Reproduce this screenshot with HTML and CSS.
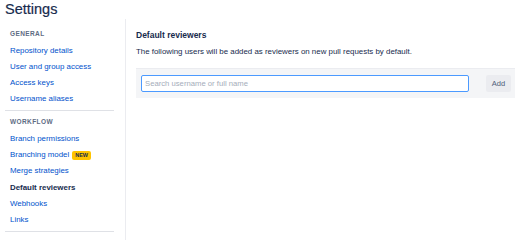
FILE: index.html
```html
<!DOCTYPE html>
<html lang="en">
<head>
    <meta charset="UTF-8">
    <title>Settings</title>
    <link rel="stylesheet" href="styles.css">
</head>
<body>
    <h1 class="page-title">Settings</h1>
    <div class="layout">
        <aside class="sidebar">
            <div class="nav-group first">
                <div class="nav-heading">General</div>
                <a class="nav-link" href="#">Repository details</a>
                <a class="nav-link" href="#">User and group access</a>
                <a class="nav-link" href="#">Access keys</a>
                <a class="nav-link" href="#">Username aliases</a>
            </div>
            <div class="nav-group">
                <div class="nav-heading">Workflow</div>
                <a class="nav-link" href="#">Branch permissions</a>
                <a class="nav-link" href="#">Branching model <span class="badge">NEW</span></a>
                <a class="nav-link" href="#">Merge strategies</a>
                <a class="nav-link active" href="#">Default reviewers</a>
                <a class="nav-link" href="#">Webhooks</a>
                <a class="nav-link" href="#">Links</a>
            </div>
        </aside>

        <main class="content">
            <h2>Default reviewers</h2>
            <p class="description">The following users will be added as reviewers on new pull requests by default.</p>
            <div class="reviewer-form">
                <input class="search" type="text" placeholder="Search username or full name">
                <button class="add-btn">Add</button>
            </div>
        </main>
    </div>
</body>
</html>
```

FILE: styles.css
```css
body {
    margin: 0;
    font-family: "Liberation Sans", Arial, sans-serif;
    color: #172b4d;
    background-color: #fff;
    overflow: hidden;
}

.page-title {
    margin: 0 0 0 5px;
    font-size: 14.5px;
    line-height: 19px;
    font-weight: normal;
    color: #172b4d;
    -webkit-text-stroke: 0.2px #172b4d;
}

.layout {
    display: flex;
    height: 221px;
}

.sidebar {
    width: 126px;
    box-sizing: border-box;
    padding: 0 11px 0 5px;
    border-right: 1px solid #ebecf0;
}

.nav-group {
    display: flex;
    flex-direction: column;
    padding: 6px 0 2.5px;
    border-bottom: 1px solid #dfe1e6;
}

.nav-group.first {
    padding-top: 10px;
}

.nav-heading {
    font-size: 6.5px;
    line-height: 10px;
    font-weight: bold;
    letter-spacing: 0.4px;
    text-transform: uppercase;
    color: #5e6c84;
    margin: 0 0 3.5px 5px;
}

.nav-link {
    display: flex;
    align-items: center;
    padding-left: 5px;
    font-size: 7.9px;
    line-height: 16.3px;
    color: #0052cc;
    text-decoration: none;
}

.nav-link.active {
    color: #172b4d;
    font-weight: bold;
}

.badge {
    margin-left: 3px;
    padding: 0 3px;
    font-size: 5.5px;
    line-height: 9px;
    font-weight: bold;
    color: #172b4d;
    background-color: #ffc400;
    border-radius: 2px;
}

.content {
    flex: 1;
    padding: 0 5px 0 10px;
}

h2 {
    margin: 10px 0 0;
    font-size: 8.5px;
    line-height: 12px;
    font-weight: bold;
}

.description {
    margin: 6px 0 0;
    font-size: 7.9px;
    line-height: 10px;
}

.reviewer-form {
    display: flex;
    align-items: center;
    gap: 17px;
    margin-top: 11px;
    padding: 6px 4px 6px 5px;
    background-color: #f4f5f7;
    border-top: 1px solid #ebecf0;
}

.search {
    width: 328px;
    height: 17px;
    box-sizing: border-box;
    padding: 0 3px;
    font-family: inherit;
    font-size: 7.7px;
    color: #172b4d;
    background-color: #fff;
    border: 1.5px solid #4c9aff;
    border-radius: 2px;
    outline: none;
}

.search::placeholder {
    color: #a5adba;
}

.add-btn {
    width: 25px;
    height: 17px;
    padding: 0;
    font-family: inherit;
    font-size: 7.5px;
    color: #505f79;
    background-color: #ebecf0;
    border: none;
    border-radius: 2px;
}
```
